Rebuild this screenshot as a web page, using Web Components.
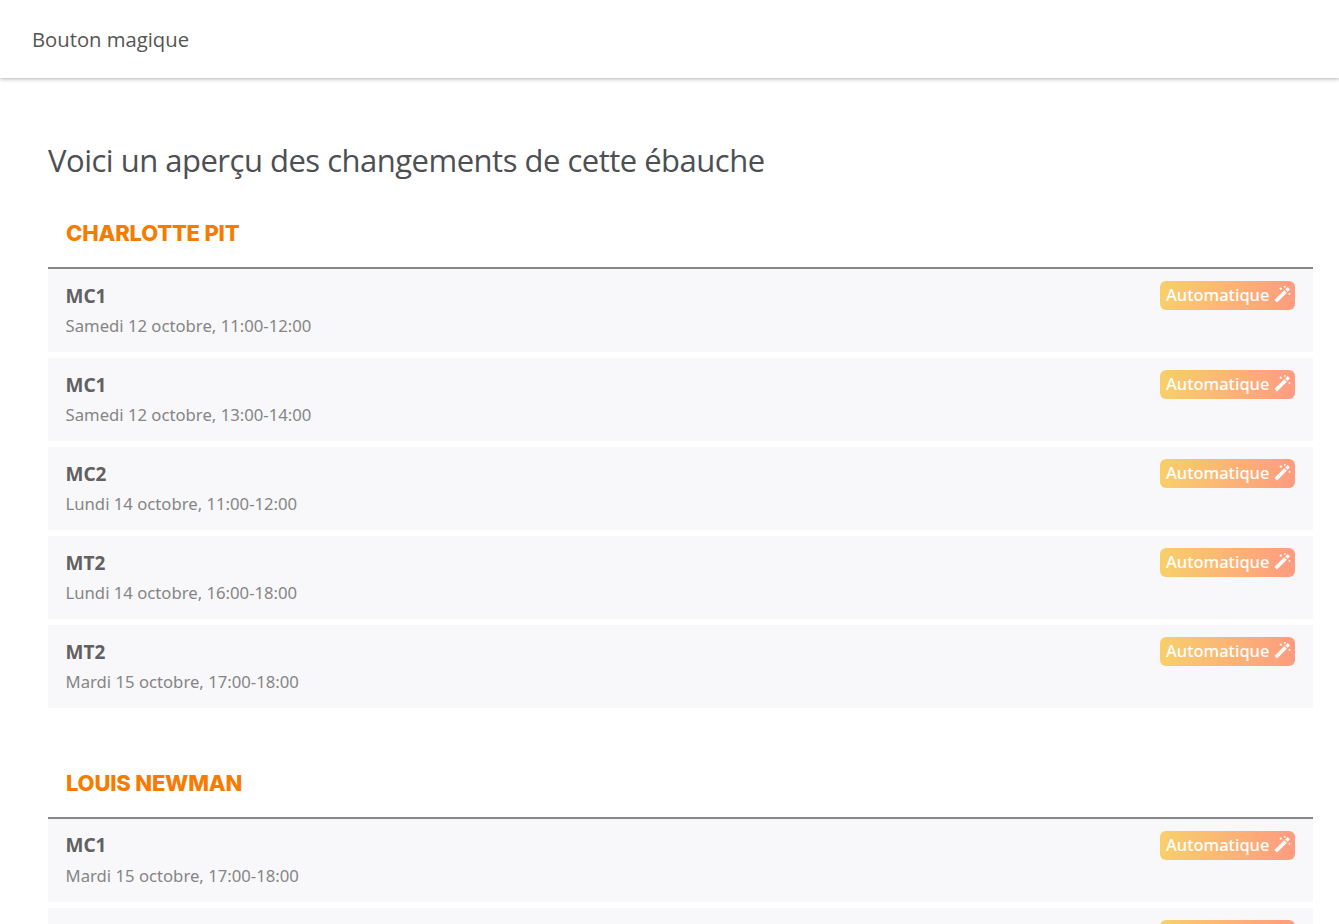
<!DOCTYPE html>
<html lang="fr"><head><meta charset="utf-8"><title>Bouton magique</title>
<style>html,body{margin:0;padding:0;background:#fff;height:100%;overflow:hidden}</style>
</head><body>
<app-page>
<app-bar slot="bar">Bouton magique</app-bar>
<page-title>Voici un aperçu des changements de cette ébauche</page-title>
<person-section name="CHARLOTTE PIT">
<shift-row code="MC1" when="Samedi 12 octobre, 11:00-12:00"></shift-row>
<shift-row code="MC1" when="Samedi 12 octobre, 13:00-14:00"></shift-row>
<shift-row code="MC2" when="Lundi 14 octobre, 11:00-12:00"></shift-row>
<shift-row code="MT2" when="Lundi 14 octobre, 16:00-18:00"></shift-row>
<shift-row code="MT2" when="Mardi 15 octobre, 17:00-18:00"></shift-row>
</person-section>
<person-section name="LOUIS NEWMAN">
<shift-row code="MC1" when="Mardi 15 octobre, 17:00-18:00"></shift-row>
<shift-row code="MC1" when="Mardi 15 octobre, 17:00-18:00"></shift-row>
</person-section>
</app-page>
<script>
function def(name,html,init){customElements.define(name,class extends HTMLElement{constructor(){super();const r=this.attachShadow({mode:'open'});r.innerHTML=html;if(init)this._i=init}connectedCallback(){if(this._i)this._i(this.shadowRoot,this)}})}
const N='"Noto Sans","Open Sans",sans-serif', O='"Open Sans","Noto Sans",sans-serif';
def('app-page',`<style>:host{display:flex;flex-direction:column;height:924px;overflow:hidden;font-family:${N};color:#555}
::slotted(app-bar){flex:none}
main{flex:none;display:flex;flex-direction:column;padding:0 26px 0 48px}</style><slot name="bar"></slot><main><slot></slot></main>`);
def('app-bar',`<style>:host{display:flex;flex:none;align-items:center;height:78px;padding-left:32px;background:#fff;box-shadow:0 1px 4px rgba(0,0,0,.3);font:20.25px ${O};color:#555}</style><slot></slot>`);
def('page-title',`<style>:host{display:block;flex:none;margin-top:58px;height:48px;font:31px/48px ${O};letter-spacing:-.5px;color:#4d4f53}</style><slot></slot>`);
def('person-section',`<style>:host{display:block;flex:none;margin-bottom:25.5px}
h2{margin:0;box-sizing:border-box;height:85px;padding:31px 18px 0;font:800 22px/36px Inter,"Liberation Sans",sans-serif;letter-spacing:-.2px;color:#f57c00;border-bottom:2px solid #85858a}
.l{display:flex;flex-direction:column;gap:6px}</style><h2></h2><div class="l"><slot></slot></div>`,(r,h)=>{r.querySelector('h2').textContent=h.getAttribute('name')});
def('shift-row',`<style>:host{display:flex;flex:none;justify-content:space-between;align-items:flex-start;box-sizing:border-box;height:83.1px;padding:12.5px 18px 0 17.5px;background:#f8f8fa}
.c{font:700 19px/28px ${N};color:#616161}
.w{margin-top:4.5px;font:16.7px/23px ${N};color:#858585}
auto-badge{margin-top:-.5px}</style><div><div class="c"></div><div class="w"></div></div><auto-badge>Automatique</auto-badge>`,(r,h)=>{r.querySelector('.c').textContent=h.getAttribute('code');r.querySelector('.w').textContent=h.getAttribute('when')});
def('auto-badge',`<style>:host{display:flex;align-items:center;box-sizing:border-box;width:135px;height:29px;padding:0 0 2px 6px;gap:5px;border-radius:6px;background:linear-gradient(90deg,#f8cf6a,#ff9b80);color:#fff;font:500 16.5px/27px ${N};white-space:nowrap}
svg{width:17px;height:17px;flex:none}</style><slot></slot><svg viewBox="0 0 17 17"><path d="M.4 14 10.2 4.2l2.6 2.6L3 16.6z" fill="#fff"/><path d="M11.2 3.4l2-2c.3-.3.6-.3.9 0l1.5 1.5c.3.3.3.6 0 .9l-2 2z" fill="#fff"/><path d="M5.6 2.6h2.4M6.8 1.4v2.4M10 .9h1.6M10.8.1v1.6M14.6 7.9h1.8M15.5 7v1.8" stroke="#fff" stroke-width="1" fill="none"/></svg>`);
</script></body></html>
